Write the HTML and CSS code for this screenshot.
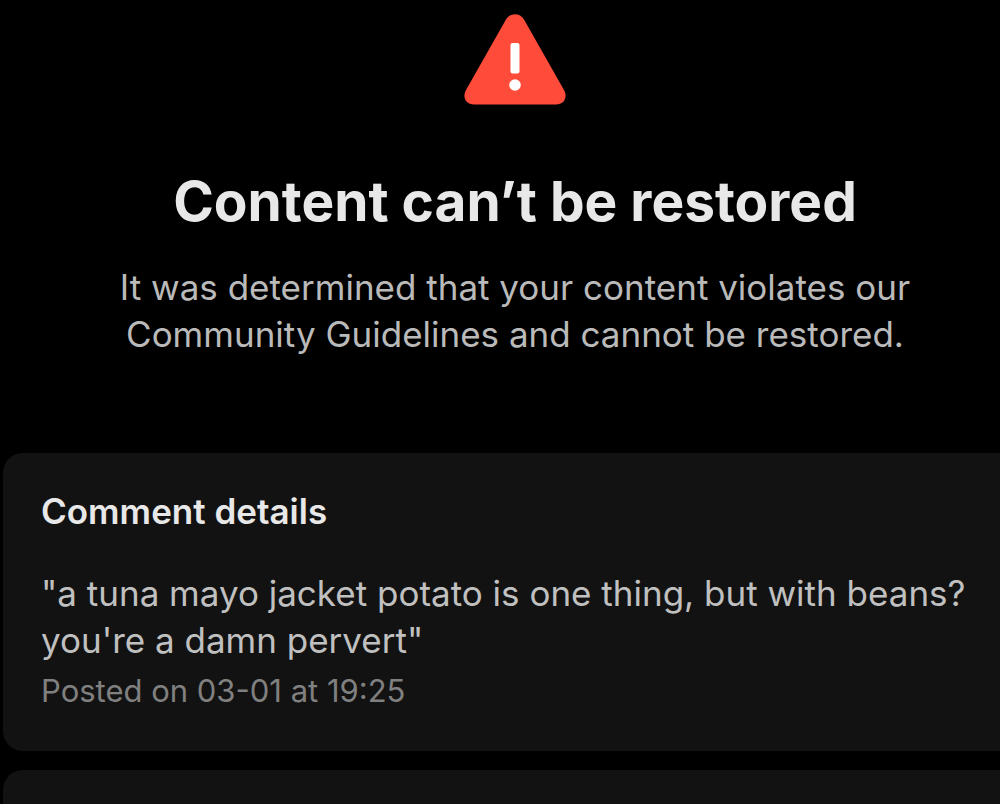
FILE: index.html
```html
<!DOCTYPE html>
<html lang="en">
<head>
    <meta charset="UTF-8">
    <meta name="viewport" content="width=device-width, initial-scale=1.0">
    <title>Content can’t be restored</title>
    <link rel="stylesheet" href="styles.css">
</head>
<body>

    <header class="status">
        <svg class="status-icon" viewBox="0 0 102 91" aria-hidden="true">
            <path fill="#ff4c3a" d="M42 5.500 C46 -1.500 56 -1.500 60 5.500 L100 76 C104 83.500 100 90.500 92 90.500 L10 90.500 C2 90.500 -2 83.500 2 76 Z"/>
            <rect x="46.500" y="29" width="9" height="30.500" rx="2" fill="#fff"/>
            <circle cx="51" cy="71" r="5.800" fill="#fff"/>
        </svg>
        <h1>Content can’t be restored</h1>
        <p>It was determined that your content violates our Community Guidelines and cannot be restored.</p>
    </header>

    <main class="cards">
        <section class="card">
            <h2>Comment details</h2>
            <p class="comment">"a tuna mayo jacket potato is one thing, but with beans? you're a damn pervert"</p>
            <p class="posted">Posted on 03-01 at 19:25</p>
        </section>
        <section class="card card-next"></section>
    </main>

</body>
</html>
```

FILE: styles.css
```css
* {
    margin: 0;
    padding: 0;
    box-sizing: border-box;
}

body {
    display: flex;
    flex-direction: column;
    min-height: 100vh;
    background: #000;
    color: #e8e8e8;
    font-family: "Inter", "Noto Sans", sans-serif;
}

.status {
    display: flex;
    flex-direction: column;
    align-items: center;
    padding: 14px 0 95px 30px;
    text-align: center;
}

.status-icon {
    width: 102px;
    height: 91px;
    margin-bottom: 64px;
}

h1 {
    font-size: 55px;
    font-weight: 700;
    line-height: 64px;
    margin-bottom: 31px;
}

.status p {
    max-width: 820px;
    color: #bababa;
    font-size: 35px;
    line-height: 47px;
}

.cards {
    display: flex;
    flex: 1;
    flex-direction: column;
    gap: 19px;
    padding-left: 3px;
}

.card {
    padding: 35px 24px 37px 38px;
    background: #121212;
    border-radius: 20px 0 0 20px;
}

/* continues below the fold */
.card-next {
    flex: 1;
    padding: 0;
    border-radius: 20px 0 0 0;
}

h2 {
    font-size: 35px;
    font-weight: 600;
    line-height: 46px;
    margin-bottom: 36px;
}

.comment {
    color: #c0c0c0;
    font-size: 35px;
    line-height: 47px;
}

.posted {
    margin-top: 4px;
    color: #808080;
    font-size: 31px;
    line-height: 46px;
}
```
